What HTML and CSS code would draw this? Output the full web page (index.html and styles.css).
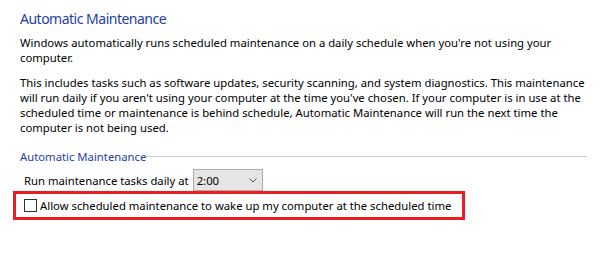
FILE: index.html
```html
<!DOCTYPE html>
<html lang="en">
<head>
    <meta charset="UTF-8">
    <title>Automatic Maintenance</title>
    <link rel="stylesheet" href="styles.css">
</head>
<body>
    <div class="page">
        <h1 class="title">Automatic Maintenance</h1>
        <p class="text">Windows automatically runs scheduled maintenance on a daily schedule when you're not using your computer.</p>
        <p class="text">This includes tasks such as software updates, security scanning, and system diagnostics. This maintenance will run daily if you aren't using your computer at the time you've chosen. If your computer is in use at the scheduled time or maintenance is behind schedule, Automatic Maintenance will run the next time the computer is not being used.</p>

        <div class="group">
            <div class="group-head">
                <span>Automatic Maintenance</span>
                <div class="group-line"></div>
            </div>
            <div class="row">
                <span>Run maintenance tasks daily at</span>
                <div class="select">
                    <span>2:00</span>
                    <svg width="8" height="5" viewBox="0 0 8 5"><path d="M0.5 0.5 L4 4 L7.5 0.5" fill="none" stroke="#555" stroke-width="1"/></svg>
                </div>
            </div>
            <label class="check-row">
                <span class="checkbox"></span>
                <span>Allow scheduled maintenance to wake up my computer at the scheduled time</span>
            </label>
        </div>
    </div>
</body>
</html>
```

FILE: styles.css
```css
body {
    margin: 0;
    background: #fff;
    font-family: "Noto Sans", "Open Sans", sans-serif;
    font-size: 11.3px;
    color: #000;
}
.page {
    width: 570px;
    padding: 9px 0 0 20px;
}
.title {
    margin: 0 0 6px 0;
    font-size: 14px;
    font-weight: 400;
    letter-spacing: -0.5px;
    line-height: 20px;
    color: #1e3ea6;
}
.text {
    margin: 0 0 10px 0;
    line-height: 15px;
}
.group {
    margin-top: 14px;
}
.group-head {
    display: flex;
    align-items: center;
    color: #1e3ea6;
    line-height: 15px;
    width: 567px;
}
.group-line {
    flex: 1;
    height: 0;
    border-top: 1px solid #c8cdd4;
}
.row {
    display: flex;
    align-items: center;
    gap: 4px;
    padding-left: 4px;
    margin-top: 5px;
    line-height: 15px;
}
.select {
    display: flex;
    align-items: center;
    justify-content: space-between;
    box-sizing: border-box;
    width: 70px;
    height: 22px;
    padding: 0 5px 0 3px;
    background: #e5e5e5;
    border: 1px solid #adadad;
}
.check-row {
    display: flex;
    align-items: center;
    gap: 3px;
    width: fit-content;
    margin-left: -7px;
    padding: 0 11px 0 8px;
    height: 23px;
    line-height: 15px;
    border: 3px solid #ec1c24;
}
.checkbox {
    width: 11px;
    height: 11px;
    border: 1px solid #333;
    background: #fff;
}
```
